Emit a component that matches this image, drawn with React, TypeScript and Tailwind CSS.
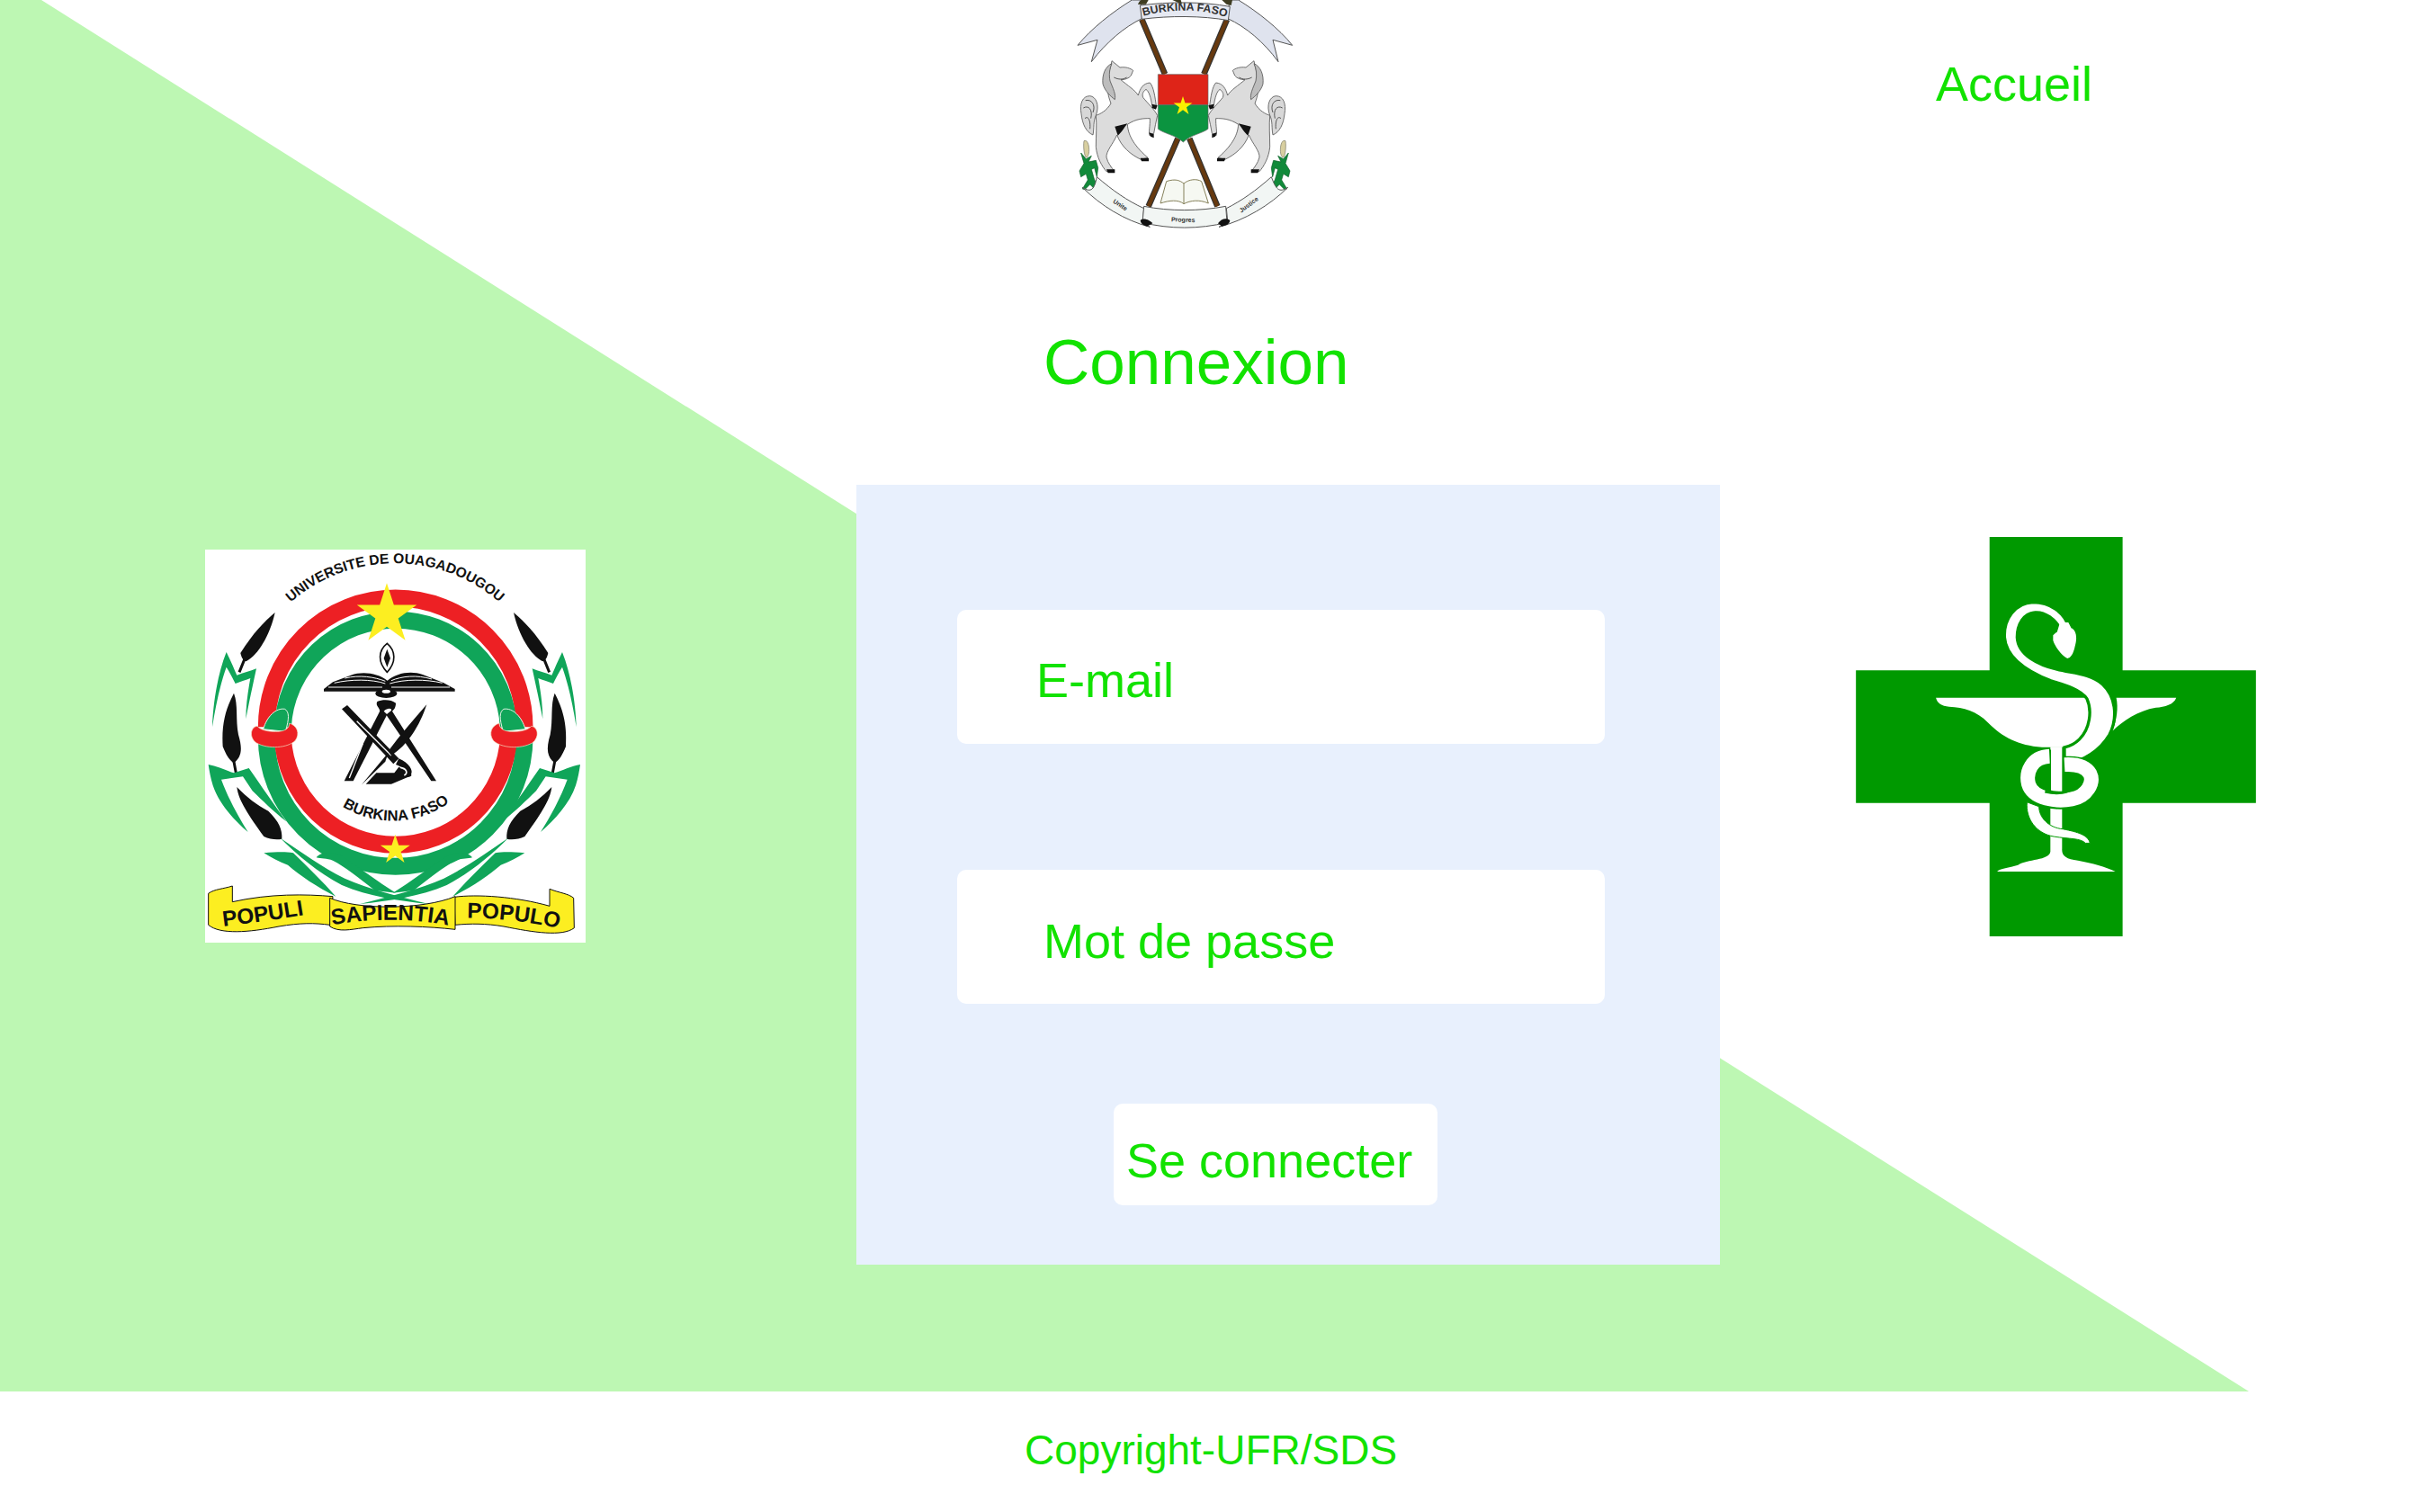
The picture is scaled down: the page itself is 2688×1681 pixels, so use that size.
const star = (cx: number, cy: number, R: number) => {
  const pts: string[] = [];
  for (let i = 0; i < 10; i++) {
    const r = i % 2 === 0 ? R : R * 0.382;
    const a = (Math.PI / 5) * i - Math.PI / 2;
    pts.push(`${cx + r * Math.cos(a)},${cy + r * Math.sin(a)}`);
  }
  return pts.join(" ");
};

const Horse = () => (
  <g stroke="#555" strokeWidth="2.5" strokeLinejoin="round">
    {/* tail */}
    <path d="M205,385 C218,350 205,322 185,320 C160,320 150,345 156,380 C160,415 172,440 195,450 C200,425 195,405 205,385Z" fill="#d8d8d8" />
    <path d="M170,335 C190,330 205,350 195,375 M163,360 C180,350 195,365 188,395 M168,395 C178,385 188,400 185,430" fill="none" strokeWidth="3" />
    {/* body */}
    <path d="M258,203 L285,225 C305,222 320,228 329,235 L322,252 C315,262 300,266 288,266 C310,285 335,300 346,318 C352,295 362,278 385,276 C398,290 402,325 406,352 L392,352 C388,325 382,305 372,298 C362,305 358,315 362,325 C378,345 400,365 410,385 C405,405 402,425 398,445 L384,452 C380,440 386,420 385,395 C365,395 340,395 310,415 C312,445 325,480 378,526 L355,532 C320,515 290,490 275,450 C262,480 238,505 240,525 C245,545 258,560 266,570 L240,572 C225,555 208,525 205,490 C205,450 208,420 205,385 C220,380 240,370 255,345 C245,320 238,285 245,255 C250,235 255,220 258,203Z" fill="#dcdcdc" />
    {/* mane */}
    <path d="M258,212 C235,222 225,250 228,280 C235,305 255,322 268,332 C272,315 262,295 252,270 C248,250 250,230 258,212Z" fill="#bdbdbd" />
    <path d="M268,422 L310,412 C300,425 288,445 278,452Z" fill="#111" stroke="none" />
    <path d="M240,565 H268 V577 H245Z M353,527 H381 V538 H357Z M382,442 L398,447 L398,460 L387,455Z M392,347 L410,352 L405,365 L392,360Z" fill="#111" stroke="none" />
    <path d="M265,258 C280,266 295,266 308,258" fill="none" strokeWidth="3" />
  </g>
);

const Corn = () => (
  <g>
    <path d="M165,470 C175,465 182,480 182,500 C182,515 178,525 172,525 C166,520 162,490 165,470Z" fill="#d8cfa0" stroke="#776" strokeWidth="2" />
    <path d="M155,510 L172,530 L190,520 L180,540 L205,535 L212,560 L208,590 L200,560 L190,565 L200,600 L224,638 L200,630 L185,615 L168,632 L160,630 L178,600 L172,580 L155,590 L150,570 L165,545Z" fill="#118a3a" stroke="#0a5d25" strokeWidth="2" />
  </g>
);

const BurkinaEmblem = () => (
  <svg viewBox="141 0 726 768" className="w-[242px] h-[256px] shrink-0">
    {/* staves */}
    <g stroke="#333" strokeWidth="20" fill="none">
      <path d="M358,65 L435,247 M642,65 L565,247 M478,462 L380,688 M517,462 L610,688" />
    </g>
    <g stroke="#66390f" strokeWidth="13" fill="none">
      <path d="M358,65 L435,247 M642,65 L565,247 M478,462 L380,688 M517,462 L610,688" />
    </g>
    {/* top ribbon */}
    <path d="M144,151 C190,95 260,40 325,0 L355,0 L358,62 C300,90 240,140 190,206 L210,133Z" fill="#dfe3ee" stroke="#555" strokeWidth="3" />
    <path d="M860,151 C815,95 745,40 680,0 L650,0 L645,62 C705,90 765,140 813,206 L795,133Z" fill="#dfe3ee" stroke="#555" strokeWidth="3" />
    <path d="M352,18 C450,5 560,5 652,22 L646,68 C560,52 450,52 358,64Z" fill="#e6e9f2" stroke="#555" strokeWidth="3" />
    <path d="M345,15 C350,0 360,-5 380,0 L372,14Z M492,14 L460,0 H488 Z" fill="#3f3d22" />
    <path d="M640,14 L625,0 H660 L656,18Z" fill="#3f3d22" />
    <path id="brk" d="M362,54 C450,28 560,28 640,58" fill="none" />
    <text fontSize="37" fontWeight="600" fill="#333">
      <textPath href="#brk" startOffset="50%" textAnchor="middle">BURKINA FASO</textPath>
    </text>
    {/* shield */}
    <path d="M412,248 H579 V350 H412Z" fill="#de2418" stroke="#666" strokeWidth="2" />
    <path d="M412,350 H579 V430 C560,445 520,450 496,474 C470,450 430,445 412,430Z" fill="#0b9440" stroke="#666" strokeWidth="2" />
    <polygon points={star(495, 354, 33)} fill="#fbf000" />
    <Horse />
    <g transform="translate(990,0) scale(-1,1)"><Horse /></g>
    <Corn />
    <g transform="translate(1002,0) scale(-1,1)"><Corn /></g>
    {/* book */}
    <path d="M420,678 L440,605 C470,595 485,602 498,612 C515,598 540,595 557,605 L580,678 C550,665 520,668 498,680 C480,665 450,668 420,678Z M498,612 V680" fill="#f6f8f2" stroke="#85805a" strokeWidth="3" />
    {/* lower ribbons */}
    <path d="M160,625 C190,645 200,630 208,590 C260,635 310,670 365,695 L360,745 L385,757 C300,735 220,685 160,625Z" fill="#f2f6f4" stroke="#555" strokeWidth="3" />
    <path d="M845,625 C815,645 805,630 790,590 C740,635 690,670 640,695 L645,745 L615,757 C700,735 785,685 845,625Z" fill="#f2f6f4" stroke="#555" strokeWidth="3" />
    <path d="M365,688 C450,705 550,705 638,688 L642,742 C550,765 450,765 360,742Z" fill="#f2f6f4" stroke="#555" strokeWidth="3" />
    <path d="M353,735 C365,725 385,735 394,745 L375,755 C365,752 355,748 353,735Z M612,745 C622,730 640,725 652,735 C650,748 640,752 625,755Z" fill="#111" />
    <text x="456" y="740" fontSize="21" fontWeight="600" fill="#333" transform="rotate(2 500 735)">Progres</text>
    <text x="260" y="675" fontSize="21" fontWeight="600" fill="#333" transform="rotate(33 260 675)">Unite</text>
    <text x="690" y="710" fontSize="21" fontWeight="600" fill="#333" transform="rotate(-37 690 710)">Justice</text>
  </svg>
);

const Cattail = () => (
  <g>
    {/* black leaves */}
    <path d="M287,243 C250,275 215,310 172,378 C175,395 185,408 192,405 C230,385 270,320 287,243Z" fill="#111" />
    <path d="M185,400 L168,442 M150,740 L157,778" stroke="#111" strokeWidth="9" />
    <path d="M150,512 C125,560 108,610 113,690 C125,720 135,735 150,745 C175,725 180,700 165,650 C155,600 165,550 150,512Z" fill="#111" />
    <path d="M160,825 C165,870 200,920 250,990 C270,1000 295,1002 310,998 C312,965 300,940 265,905 C225,885 195,860 160,825Z" fill="#111" />
    {/* green sprays */}
    <path d="M78,625 C80,550 95,450 125,375 C140,405 150,430 160,452 C180,445 205,438 225,430 C212,490 200,545 190,598 C190,550 198,500 205,462 C190,468 175,472 155,480 C145,460 135,440 125,425 C105,480 90,550 78,625Z" fill="#10a559" />
    <path d="M65,750 C95,755 125,770 150,778 L200,762 C240,820 285,885 325,940 C280,905 245,870 212,838 L180,790 L108,800 C130,860 165,925 197,975 C150,935 100,880 80,820 C72,795 68,770 65,750Z" fill="#10a559" />
    <path d="M305,995 C380,1045 440,1090 520,1130 C600,1165 700,1190 800,1215 C700,1205 600,1190 510,1152 C430,1110 360,1050 305,995Z" fill="#10a559" />
    <path d="M250,1045 C290,1042 320,1040 348,1045 C400,1095 445,1140 490,1190 C430,1160 370,1120 330,1085 C300,1075 275,1060 250,1045Z" fill="#10a559" />
    <path d="M425,1060 C440,1040 480,1040 510,1055 C570,1095 630,1140 690,1178 L620,1170 C570,1130 520,1090 480,1070 C460,1062 440,1065 425,1060Z" fill="#10a559" />
    {/* ring knot */}
    <path d="M248,632 C260,590 290,560 320,565 C335,575 335,595 322,640Z" fill="#10a559" stroke="#e6f4e6" strokeWidth="3" />
    <path d="M228,622 C205,625 200,660 225,678 C265,700 330,695 355,670 C372,645 360,620 335,612 C335,630 320,640 290,640 C260,640 240,635 228,622Z" fill="#ed2024" stroke="#f3e8c8" strokeWidth="2" />
  </g>
);

const UniversityLogo = () => (
  <svg viewBox="54 33 1269 1311" className="w-[423px] h-[437px] shrink-0 bg-white">
    {/* ring */}
    <g fill="none" strokeWidth="57">
      <path d="M259,625 A430,430 0 0 1 1119,625" stroke="#ed2024" />
      <path d="M313,625 A377,377 0 0 1 1066,625" stroke="#10a559" />
      <path d="M259,660 A430,430 0 0 0 1119,660" stroke="#10a559" />
      <path d="M313,660 A377,377 0 0 0 1066,660" stroke="#ed2024" />
    </g>
    <Cattail />
    <g transform="translate(1370,0) scale(-1,1)"><Cattail /></g>
    <polygon points={star(660, 250, 105)} fill="#fcee21" />
    <polygon points={star(688, 1035, 52)} fill="#fcee21" />
    {/* arc text */}
    <path id="ouaga" d="M325,222 A530,530 0 0 1 1050,222" fill="none" />
    <text fontSize="47" fontWeight="600" fill="#111">
      <textPath href="#ouaga" startOffset="50%" textAnchor="middle">UNIVERSITE DE OUAGADOUGOU</textPath>
    </text>
    <path id="bf" d="M500,882 A322,322 0 0 0 880,868" fill="none" />
    <text fontSize="50" fontWeight="600" fill="#111">
      <textPath href="#bf" startOffset="50%" textAnchor="middle">BURKINA FASO</textPath>
    </text>
    {/* book, flame and compass */}
    <g transform="translate(450,300)" fill="#111">
      <path d="M211,46 C240,70 242,110 211,142 C180,110 180,70 211,46Z" fill="#fff" stroke="#111" strokeWidth="5" />
      <path d="M211,65 L222,95 L211,125 L200,95Z" />
      <path d="M0,198 L30,175 L90,152 C130,138 180,145 212,170 C240,145 290,135 330,150 L400,178 L437,198 V206 H0Z" />
      <path d="M35,178 C90,165 160,165 205,180 M220,180 C270,165 340,165 395,178 M70,162 C120,150 170,158 205,172 M225,170 C260,155 310,150 360,165 M15,192 H195 M225,192 H420" stroke="#fff" strokeWidth="3" fill="none" />
      <ellipse cx="208" cy="213" rx="36" ry="15" />
      <ellipse cx="208" cy="206" rx="14" ry="6" fill="#fff" />
      <path d="M178,240 C195,232 225,232 240,245 C240,262 232,268 228,272 L375,505 L358,505 L205,280 L188,280 C190,260 170,255 178,240Z" />
      <path d="M192,262 L68,505 L98,505 L215,275Z" />
      <path d="M200,272 C212,260 228,262 225,270 L210,282Z" fill="#fff" />
      <path d="M60,265 L78,252 L250,430 L232,448Z" />
      <path d="M110,305 L225,420" stroke="#fff" strokeWidth="4" />
      <path d="M343,250 C320,320 280,385 225,420 L215,405 C255,350 300,300 343,250Z" />
      <path d="M215,410 L125,518 L205,440Z" />
      <path d="M175,478 L235,478 L250,458 C280,475 310,485 280,492 L225,515 H140Z" />
      <path d="M250,430 C285,445 300,470 290,485 L265,492 C280,475 265,460 240,450Z" />
      <path d="M255,460 C275,462 282,478 268,486" stroke="#fff" strokeWidth="5" fill="none" />
      <path d="M130,380 L85,495" stroke="#fff" strokeWidth="4" />
      <path d="M270,395 L345,500" stroke="#fff" strokeWidth="4" />
    </g>
    {/* banner */}
    <g stroke="#111" strokeWidth="3" fill="#fcee21">
      <path d="M145,1155 C115,1165 85,1165 65,1180 L65,1285 C105,1318 200,1310 300,1290 C370,1278 420,1278 470,1285 L480,1190 C390,1182 270,1180 145,1208Z" />
      <path d="M1203,1165 C1235,1178 1265,1180 1283,1195 L1285,1295 C1245,1325 1150,1310 1050,1290 C990,1280 940,1280 888,1285 L885,1192 C960,1182 1090,1190 1203,1222Z" />
      <path d="M470,1195 C560,1235 780,1235 888,1190 L888,1300 C800,1290 680,1285 580,1295 C540,1300 500,1310 470,1290Z" />
    </g>
    <g fontWeight="700" fontSize="73" fill="#111">
      <path id="p1" d="M115,1290 C200,1280 300,1265 392,1250" fill="none" />
      <text><textPath href="#p1">POPULI</textPath></text>
      <path id="p2" d="M478,1285 C600,1262 760,1262 878,1290" fill="none" />
      <text><textPath href="#p2">SAPIENTIA</textPath></text>
      <path id="p3" d="M928,1262 C1030,1262 1140,1275 1240,1298" fill="none" />
      <text><textPath href="#p3">POPULO</textPath></text>
    </g>
  </svg>
);

const snakeBody = "M780,352 C765,300 715,268 660,268 C600,270 562,325 565,385 C570,450 630,495 720,530 C770,545 820,560 840,590 C858,630 850,690 815,725 C800,740 785,748 765,752 L765,808 C830,800 885,760 915,710 C945,650 935,580 890,540 C850,505 790,505 740,492 C680,478 610,445 607,385 C607,340 630,305 665,302 C700,298 735,325 752,358Z";

const PharmacyCross = () => (
  <svg viewBox="69 50 1335 1333" className="w-[445px] h-[444px] shrink-0">
    <path d="M515,50 H959 V495 H1404 V938 H959 V1383 H515 V938 H69 V495 H515Z" fill="#009900" />
    {/* cup */}
    <path d="M336,587 H835 C860,615 855,680 825,715 C800,745 775,750 750,752 H690 C610,745 560,720 510,670 C470,630 430,620 380,617 C355,615 340,605 336,587Z" fill="#fff" />
    <path d="M938,587 H1138 C1130,610 1100,618 1070,620 C1010,630 960,665 925,698 C940,660 945,620 938,587Z" fill="#fff" />
    {/* snake, top half */}
    <path d={snakeBody} fill="#fff" stroke="#009900" strokeWidth="10" />
    <path d="M750,335 L778,335 L792,362 L735,385Z M727,378 C745,360 770,350 790,355 C805,365 808,385 800,415 C795,440 785,455 775,455 C760,450 735,420 727,395Z" fill="#fff" />
    {/* staff */}
    <path d="M718,750 H757 V1090 C755,1115 770,1125 810,1130 C860,1140 900,1150 935,1167 H540 C550,1155 580,1155 610,1145 C640,1125 715,1130 718,1100Z" fill="#fff" />
    <path d="M718,760 V900" stroke="#009900" strokeWidth="4" />
    {/* coil */}
    <path d="M705,782 C650,790 635,840 645,875 C660,925 740,935 790,925 C840,915 865,870 850,840 C835,815 800,810 770,812" fill="none" stroke="#009900" strokeWidth="60" />
    <path d="M715,782 C655,785 635,835 645,875 C660,925 740,935 790,925 C840,915 865,870 850,840 C835,815 800,808 765,810" fill="none" stroke="#fff" strokeWidth="48" />
    <path d="M690,845 C675,860 680,880 710,895 M760,865 C800,855 810,870 800,885 C780,905 740,910 700,900" fill="none" stroke="#009900" strokeWidth="8" />
    <path d="M705,850 L683,870 L705,890Z" fill="#009900" />
    <path d="M640,935 C635,990 670,1040 730,1050 C780,1058 820,1055 835,1072 L850,1072 C845,1045 810,1035 760,1025 C710,1020 680,985 680,950Z" fill="#fff" stroke="#009900" strokeWidth="3" />
  </svg>
);

export default function App() {
  return (
    <div className="relative w-full h-[1681px] overflow-hidden bg-white font-['Liberation_Sans',Arial,sans-serif] text-[#12e200]">
      {/* diagonal background */}
      <div className="absolute left-0 top-0 w-full h-[1547px] bg-[#bdf7b3] [clip-path:polygon(0_0,46px_0,2500px_100%,0_100%)]" />

      <div className="relative flex flex-col">
        {/* header */}
        <div className="flex items-start h-[255px]">
          <div className="ml-[1197px]">
            <BurkinaEmblem />
          </div>
          <a className="ml-[713px] mt-[63px] text-[54px] leading-[60px]">Accueil</a>
        </div>

        <h1 className="ml-[1160px] mt-[108px] text-[71px] leading-[80px] font-normal">Connexion</h1>

        {/* main row */}
        <div className="flex items-start mt-[96px]">
          <div className="ml-[228px] mt-[72px]">
            <UniversityLogo />
          </div>

          <form className="flex flex-col items-start ml-[301px] w-[960px] h-[867px] pt-[139px] pl-[112px] bg-[#e8f0fd]">
            <input
              type="email"
              placeholder="E-mail"
              className="w-[720px] h-[149px] pl-[88px] pt-[6px] bg-white rounded-[10px] outline-none text-[54px] text-[#12e200] placeholder:text-[#12e200]"
            />
            <input
              type="password"
              placeholder="Mot de passe"
              className="w-[720px] h-[149px] mt-[140px] pl-[96px] pt-[9px] bg-white rounded-[10px] outline-none text-[54px] text-[#12e200] placeholder:text-[#12e200]"
            />
            <button
              type="button"
              className="w-[360px] h-[113px] mt-[111px] ml-[174px] pl-[14px] pt-[14px] text-left bg-white rounded-[10px] text-[54px] whitespace-nowrap"
            >
              Se connecter
            </button>
          </form>

          <div className="ml-[151px] mt-[58px]">
            <PharmacyCross />
          </div>
        </div>

        {/* footer */}
        <p className="ml-[1139px] mt-[178px] text-[46px] leading-[56px]">Copyright-UFR/SDS</p>
      </div>
    </div>
  );
}
